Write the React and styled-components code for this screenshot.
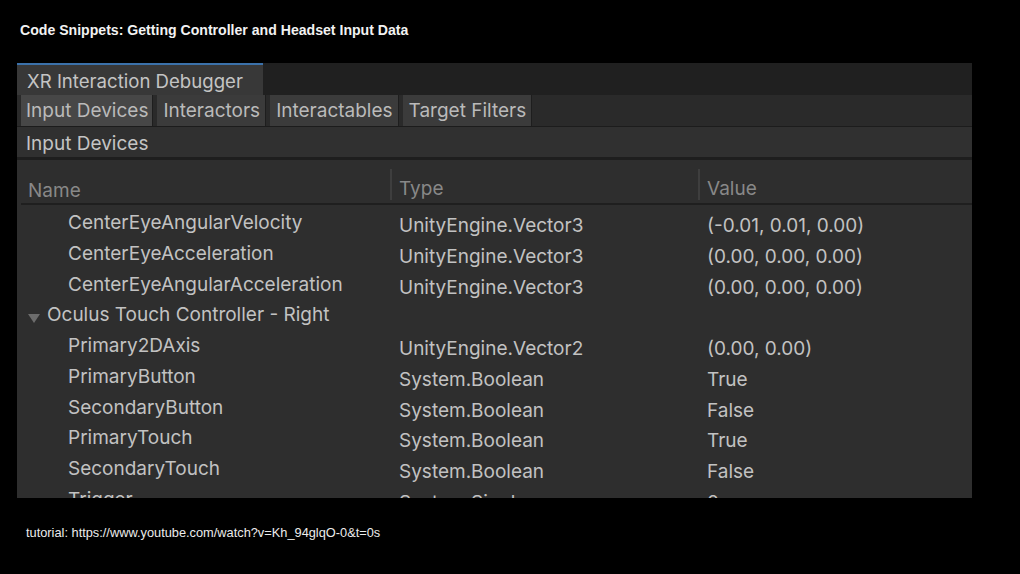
import React from "react";
import styled, { createGlobalStyle } from "styled-components";

const GlobalStyle = createGlobalStyle`
 body {
  margin: 0;
  background: #000;
  overflow: hidden;
 }
`;

const Page = styled.div`
 width: 1020px;
 height: 574px;
 background: #000;
 display: flex;
 flex-direction: column;
`;

const Title = styled.div`
 margin: 22px 0 0 20px;
 height: 16px;
 line-height: 16px;
 font-family: "Liberation Sans", Arial, sans-serif;
 font-weight: bold;
 font-size: 14.1px;
 color: #f2f2f2;
`;

const Panel = styled.div`
 margin: 25px 0 0 17px;
 width: 955px;
 height: 435px;
 background: #2e2e2e;
 display: flex;
 flex-direction: column;
 overflow: hidden;
 font-family: Inter, "Noto Sans", sans-serif;
 color: #c2c2c2;
`;

const WindowBar = styled.div`
 height: 32px;
 flex-shrink: 0;
 background: #202020;
 display: flex;
`;

const WindowTab = styled.div`
 width: 236px;
 padding: 3px 0 0 10px;
 background: #383838;
 border-top: 2px solid #3b71aa;
 font-size: 18.6px;
 line-height: 27px;
 color: #c4c4c4;
`;

const Toolbar = styled.div`
 height: 31px;
 flex-shrink: 0;
 background: #2a2a2a;
 border-bottom: 1px solid #1c1c1c;
 display: flex;
 padding-left: 4px;
 gap: 4px;
`;

const ToolTab = styled.div`
 padding: 1px ${(p) => (p.$active ? "4px 0 5px" : "5px 0 6px")};
 background: ${(p) => (p.$active ? "#474747" : "#3b3b3b")};
 border-right: 1px solid #1e1e1e;
 font-size: 19px;
 line-height: 30px;
 color: #bababa;
`;

const SectionLabel = styled.div`
 height: 33px;
 flex-shrink: 0;
 padding: 4px 0 0 9px;
 box-sizing: border-box;
 background: #303030;
 border-bottom: 3px solid #1e1e1e;
 font-size: 19px;
 line-height: 26px;
 color: #c4c4c4;
`;

const Table = styled.div`
 margin: 7px 0 0 4px;
 display: flex;
 flex-direction: column;
`;

const HeadRow = styled.div`
 display: grid;
 grid-template-columns: 369px 308px 1fr;
 height: 36px;
 flex-shrink: 0;
 border-bottom: 2px solid #1f1f1f;
`;

const HeadCell = styled.div`
 display: flex;
 align-items: center;
 padding: 8px 0 0 7px;
 border-left: ${(p) => (p.$divider ? "2px solid #3e3e3e" : "none")};
 margin: ${(p) => (p.$divider ? "2px 0 5px 0" : "0")};
 font-size: 19px;
 color: #888888;
`;

const Row = styled.div`
 display: grid;
 grid-template-columns: 369px 308px 1fr;
 height: 30.75px;
 flex-shrink: 0;
 font-size: 19px;
 color: #c2c2c2;
`;

const NameCell = styled.div`
 display: flex;
 align-items: center;
 padding: 3px 0 0 ${(p) => (p.$group ? "7px" : "47px")};
 white-space: nowrap;
`;

const Cell = styled.div`
 display: flex;
 align-items: center;
 padding: 9px 0 0 ${(p) => p.$pad}px;
 white-space: nowrap;
`;

const Fold = styled.span`
 width: 0;
 height: 0;
 margin: 8px 7px 0 0;
 border-left: 6px solid transparent;
 border-right: 6px solid transparent;
 border-top: 9px solid #6c6c6c;
`;

const Footer = styled.div`
 margin: 28px 0 0 26px;
 line-height: 14px;
 font-family: "Liberation Sans", Arial, sans-serif;
 font-size: 12.8px;
 color: #ececec;
`;

const rows = [
 { name: "CenterEyeAngularVelocity", type: "UnityEngine.Vector3", value: "(-0.01, 0.01, 0.00)" },
 { name: "CenterEyeAcceleration", type: "UnityEngine.Vector3", value: "(0.00, 0.00, 0.00)" },
 { name: "CenterEyeAngularAcceleration", type: "UnityEngine.Vector3", value: "(0.00, 0.00, 0.00)" },
 { name: "Oculus Touch Controller - Right", group: true },
 { name: "Primary2DAxis", type: "UnityEngine.Vector2", value: "(0.00, 0.00)" },
 { name: "PrimaryButton", type: "System.Boolean", value: "True" },
 { name: "SecondaryButton", type: "System.Boolean", value: "False" },
 { name: "PrimaryTouch", type: "System.Boolean", value: "True" },
 { name: "SecondaryTouch", type: "System.Boolean", value: "False" },
 { name: "Trigger", type: "System.Single", value: "0" },
];

export default function App() {
 return (
  <Page>
   <GlobalStyle />
   <Title>Code Snippets: Getting Controller and Headset Input Data</Title>
   <Panel>
    <WindowBar>
     <WindowTab>XR Interaction Debugger</WindowTab>
    </WindowBar>
    <Toolbar>
     <ToolTab $active>Input Devices</ToolTab>
     <ToolTab>Interactors</ToolTab>
     <ToolTab>Interactables</ToolTab>
     <ToolTab>Target Filters</ToolTab>
    </Toolbar>
    <SectionLabel>Input Devices</SectionLabel>
    <Table>
     <HeadRow>
      <HeadCell>Name</HeadCell>
      <HeadCell $divider>Type</HeadCell>
      <HeadCell $divider>Value</HeadCell>
     </HeadRow>
     {rows.map((r) => (
      <Row key={r.name}>
       <NameCell $group={r.group}>
        {r.group && <Fold />}
        {r.name}
       </NameCell>
       <Cell $pad={9}>{r.type}</Cell>
       <Cell $pad={9}>{r.value}</Cell>
      </Row>
     ))}
    </Table>
   </Panel>
   <Footer>tutorial: https://www.youtube.com/watch?v=Kh_94glqO-0&t=0s</Footer>
  </Page>
 );
}
